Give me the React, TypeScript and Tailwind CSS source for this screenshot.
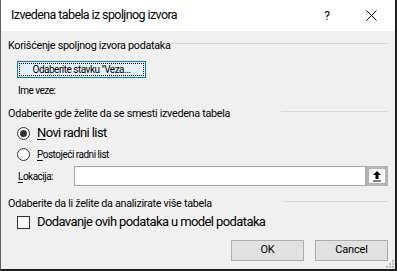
import React from "react";

const font = { fontFamily: 'Roboto, "Noto Sans", sans-serif' };

function Radio({ checked }: { checked?: boolean }) {
  return (
    <div className="w-[13px] h-[13px] rounded-full border border-[#333333] bg-white flex items-center justify-center">
      {checked && <div className="w-[7px] h-[7px] rounded-full bg-[#333333]" />}
    </div>
  );
}

export default function App() {
  return (
    <div
      className="w-[397px] h-[271px] bg-[#f0f0f0] border-l border-l-[#5f5f5f] border-r-2 border-r-[#1e1e1e] border-b-2 border-b-[#1e1e1e] flex flex-col overflow-hidden relative text-black"
      style={font}
    >
      {/* title bar */}
      <div className="h-[31px] shrink-0 bg-white flex items-center pl-[10px] pr-[18px]">
        <span className="text-[12.5px] tracking-[-0.6px] flex-1">Izvedena tabela iz spoljnog izvora</span>
        <span className="text-[12px] mr-[36px]">?</span>
        <svg width="11" height="11" viewBox="0 0 11 11">
          <path d="M0.5 0.5 L10.5 10.5 M10.5 0.5 L0.5 10.5" stroke="#111" strokeWidth="1" />
        </svg>
      </div>

      {/* body */}
      <div className="flex-1 flex flex-col pl-[7px] pr-[7px] text-[10px] tracking-[-0.5px]">
        {/* section 1 */}
        <div className="flex items-center h-[14px] mt-[8px]">
          <span className="whitespace-nowrap text-[10.8px] tracking-[-0.3px]">Korišćenje spoljnog izvora podataka</span>
          <div className="ml-auto w-[233px] h-px bg-[#d8d8d8] mt-[-5px]" />
        </div>
        <div className="pl-[9px] mt-[8px]">
          <div className="w-[129px] h-[17px] border border-[#0078d7] bg-[#e5f1fb] p-px">
            <div className="h-full border border-dotted border-black flex items-center justify-center whitespace-nowrap">
              Odaberite stavku "Veza...
            </div>
          </div>
        </div>
        <div className="pl-[10px] mt-[5px] h-[14px] flex items-center">Ime veze:</div>

        {/* section 2 */}
        <div className="flex items-center h-[14px] mt-[10px]">
          <span className="whitespace-nowrap text-[10.8px] tracking-[-0.3px]">Odaberite gde želite da se smesti izvedena tabela</span>
          <div className="ml-auto w-[107px] h-px bg-[#d8d8d8] mt-[-5px]" />
        </div>
        <div className="flex items-center pl-[9px] mt-[4px] h-[16px] gap-[7px]">
          <Radio checked />
          <span className="text-[13px] tracking-[-0.6px]">
            <span className="underline underline-offset-2">N</span>ovi radni list
          </span>
        </div>
        <div className="flex items-center pl-[9px] mt-[5px] h-[16px] gap-[7px]">
          <Radio />
          <span>
            <span className="underline underline-offset-2">P</span>ostojeći radni list
          </span>
        </div>
        <div className="flex items-center mt-[4px] h-[20px]">
          <span className="pl-[10px] w-[66px]">
            <span className="underline underline-offset-2">L</span>okacija:
          </span>
          <div className="flex-1 h-[20px] border border-[#a6a6a6] bg-white" />
          <div className="w-[22px] h-[20px] border-[3px] border-[#b4b4b4] bg-white flex items-center justify-center">
            <svg width="10" height="11" viewBox="0 0 10 11">
              <path d="M5 0 L9 4 L6.5 4 L6.5 8 L3.5 8 L3.5 4 L1 4 Z" fill="#000" />
              <rect x="1" y="9.5" width="8" height="1" fill="#000" />
            </svg>
          </div>
        </div>

        {/* section 3 */}
        <div className="flex items-center h-[14px] mt-[11px]">
          <span className="whitespace-nowrap text-[10.8px] tracking-[-0.3px]">Odaberite da li želite da analizirate više tabela</span>
          <div className="ml-auto w-[105px] h-px bg-[#d8d8d8] mt-[-5px]" />
        </div>
        <div className="flex items-center pl-[9px] mt-[2px] h-[18px] gap-[7px]">
          <div className="w-[13px] h-[13px] border border-[#333333] bg-white" />
          <span className="text-[13px] tracking-[-0.6px]">Dodavanje ovih podataka u model podataka</span>
        </div>

        {/* buttons */}
        <div className="flex justify-end gap-[11px] mt-[9px]">
          <button className="w-[73px] h-[21px] border border-[#adadad] bg-[#e1e1e1] text-[11px] tracking-[-0.2px]">OK</button>
          <button className="w-[73px] h-[21px] border border-[#adadad] bg-[#e1e1e1] text-[11px] tracking-[-0.2px]">Cancel</button>
        </div>
      </div>

      {/* resize grip */}
      <svg className="absolute right-[1px] bottom-[1px]" width="8" height="8" viewBox="0 0 8 8">
        <rect x="6" y="0" width="2" height="2" fill="#b8b8b8" />
        <rect x="3" y="3" width="2" height="2" fill="#b8b8b8" />
        <rect x="6" y="3" width="2" height="2" fill="#b8b8b8" />
        <rect x="0" y="6" width="2" height="2" fill="#b8b8b8" />
        <rect x="3" y="6" width="2" height="2" fill="#b8b8b8" />
        <rect x="6" y="6" width="2" height="2" fill="#b8b8b8" />
      </svg>
    </div>
  );
}
